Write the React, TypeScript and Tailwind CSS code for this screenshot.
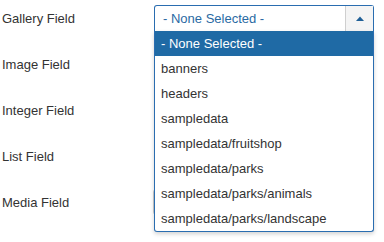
import React from "react";

const options = [
  "- None Selected -",
  "banners",
  "headers",
  "sampledata",
  "sampledata/fruitshop",
  "sampledata/parks",
  "sampledata/parks/animals",
  "sampledata/parks/landscape",
];

function Row({ label, children }: { label: string; children?: React.ReactNode }) {
  return (
    <div className="flex h-[26px] items-center">
      <div className="w-[153px] shrink-0 pl-[2px] text-[13px] leading-none text-[#333333]">{label}</div>
      <div className="relative h-full flex-1">{children}</div>
    </div>
  );
}

export default function App() {
  return (
    <div
      className="h-[242px] w-[384px] overflow-hidden bg-white"
      style={{ fontFamily: '"Liberation Sans", Arial, sans-serif' }}
    >
      <div className="flex flex-col gap-[20px] pt-[5px]">
        <Row label="Gallery Field">
          <div className="relative z-20 ml-[1px] w-[220px]">
            <div className="flex h-[27px] items-stretch rounded-t-[3px] border border-b-0 border-[#2a6db0] bg-white">
              <div className="flex flex-1 items-center pl-[8px] text-[13px] text-[#2a6aa3]">- None Selected -</div>
              <div className="flex w-[28px] items-center justify-center border-b border-l border-[#cfcfcf] bg-[#f4f4f4]">
                <svg width="8" height="5" viewBox="0 0 8 5">
                  <path d="M0 5 L4 0.5 L8 5 Z" fill="#1f5f96" />
                </svg>
              </div>
            </div>
            <div className="absolute left-0 top-[26px] w-[220px] rounded-b-[3px] border border-t-0 border-[#2a6db0] bg-white shadow-[0_2px_4px_rgba(0,0,0,0.18)]">
              {options.map((o, i) => (
                <div
                  key={o}
                  className={
                    i === 0
                      ? "flex h-[25px] items-center bg-[#1f6aa5] pl-[6px] text-[13px] text-white"
                      : "flex h-[25px] items-center pl-[6px] text-[13px] text-[#333333]"
                  }
                >
                  {o}
                </div>
              ))}
            </div>
          </div>
        </Row>
        <Row label="Image Field" />
        <Row label="Integer Field" />
        <Row label="List Field" />
        <Row label="Media Field">
          <div className="h-full w-[100px] rounded-[3px] border border-[#cccccc] bg-white" />
        </Row>
      </div>
    </div>
  );
}
